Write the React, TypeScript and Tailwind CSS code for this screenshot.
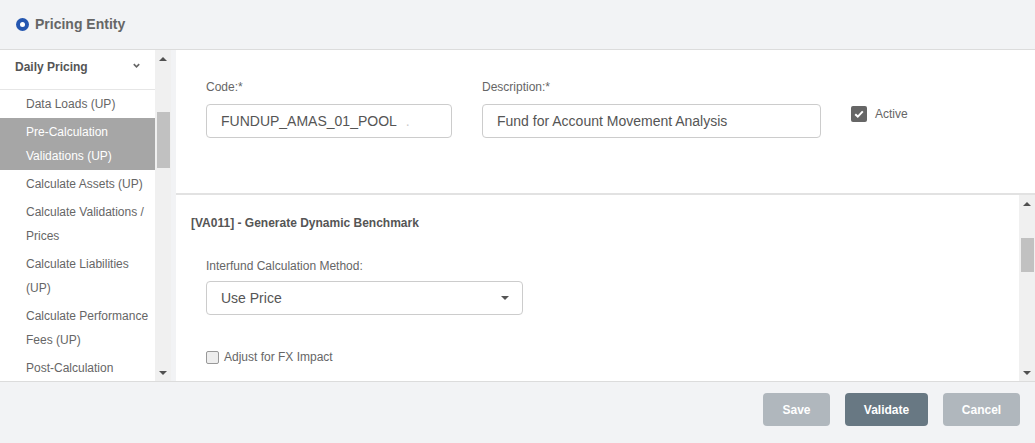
import React from "react"

function ScrollBar({thumbTop, thumbHeight}: {thumbTop: string; thumbHeight: string}) {
  return (
    <div className="w-[16px] h-full bg-[#f0f0f0] flex flex-col items-center">
      <div className="h-[17px] flex items-center justify-center">
        <div className="w-0 h-0 border-l-[4px] border-r-[4px] border-b-[4px] border-l-transparent border-r-transparent border-b-[#505050]" />
      </div>
      <div className="flex-1 w-full relative">
        <div className={`absolute left-[2px] right-[1px] bg-[#c1c1c1] ${thumbTop} ${thumbHeight}`} />
      </div>
      <div className="h-[17px] flex items-center justify-center">
        <div className="w-0 h-0 border-l-[4px] border-r-[4px] border-t-[4px] border-l-transparent border-r-transparent border-t-[#505050]" />
      </div>
    </div>
  )
}

const menuItems = [
  "Data Loads (UP)",
  "Pre-Calculation Validations (UP)",
  "Calculate Assets (UP)",
  "Calculate Validations / Prices",
  "Calculate Liabilities (UP)",
  "Calculate Performance Fees (UP)",
  "Post-Calculation",
]

export default function App() {
  return (
    <div className="w-[1035px] h-[443px] flex flex-col bg-[#f2f3f5] font-['Liberation_Sans',Arial,sans-serif] text-[#666] overflow-hidden">
      {/* header */}
      <div className="h-[50px] shrink-0 flex items-center pl-[16px] border-b border-[#dcdcdc]">
        <div className="w-[13px] h-[13px] rounded-full bg-[#2456b0] flex items-center justify-center">
          <div className="w-[5px] h-[5px] rounded-full bg-white" />
        </div>
        <span className="ml-[6px] text-[14px] font-bold text-[#666]">Pricing Entity</span>
      </div>

      <div className="flex-1 flex min-h-0">
        {/* sidebar */}
        <div className="w-[155px] bg-white overflow-hidden">
          <div className="h-[40px] border-b border-[#e6e6e6] pt-[9px] pl-[15px] pr-[14px] flex justify-between">
            <span className="text-[12px] leading-[16px] font-bold text-[#555]">Daily Pricing</span>
            <svg width="9" height="9" viewBox="0 0 10 10" className="mt-[2px]">
              <path d="M2 3.5 L5 6.5 L8 3.5" fill="none" stroke="#666" strokeWidth="1.8" />
            </svg>
          </div>
          <ul>
            {menuItems.map((item, i) => (
              <li
                key={item}
                className={`pl-[26px] pr-[5px] py-[2px] text-[12px] leading-[24px] ${i === 1 ? "bg-[#a6a6a6] text-white" : "text-[#666]"}`}
              >
                {item}
              </li>
            ))}
          </ul>
        </div>
        <ScrollBar thumbTop="top-[45px]" thumbHeight="h-[56px]" />
        <div className="w-[5px]" />

        {/* right content */}
        <div className="flex-1 flex flex-col bg-white min-w-0">
          <div className="h-[145px] shrink-0 border-b-2 border-[#e2e2e2] pl-[30px] pt-[29px] flex items-start">
            <div className="w-[246px]">
              <div className="text-[12px] leading-[16px]">Code:*</div>
              <div className="mt-[9px] h-[34px] border border-[#cccccc] rounded-[4px] flex items-center pl-[14px] text-[14px] text-[#555]">
                FUNDUP_AMAS_01_POOL<span className="ml-[9px] text-[#ccc]">.</span>
              </div>
            </div>
            <div className="w-[339px] ml-[30px]">
              <div className="text-[12px] leading-[16px]">Description:*</div>
              <div className="mt-[9px] h-[34px] border border-[#cccccc] rounded-[4px] flex items-center pl-[14px] text-[14px] text-[#555]">
                Fund for Account Movement Analysis
              </div>
            </div>
            <div className="ml-[30px] mt-[26px] flex items-center">
              <div className="w-[16px] h-[16px] rounded-[2px] bg-[#666] flex items-center justify-center">
                <svg width="12" height="12" viewBox="0 0 12 12">
                  <path d="M2.2 6.2 L4.8 8.6 L9.8 3.4" fill="none" stroke="white" strokeWidth="2" />
                </svg>
              </div>
              <span className="ml-[8px] text-[12px]">Active</span>
            </div>
          </div>

          <div className="flex-1 flex min-h-0">
            <div className="flex-1 pl-[15px] pt-[20px]">
              <div className="text-[12px] leading-[16px] font-bold text-[#555]">[VA011] - Generate Dynamic Benchmark</div>
              <div className="pl-[15px]">
                <div className="mt-[27px] text-[12px] leading-[16px]">Interfund Calculation Method:</div>
                <div className="mt-[7px] w-[317px] h-[34px] border border-[#cccccc] rounded-[4px] flex items-center justify-between pl-[14px] pr-[13px] text-[14px] text-[#555]">
                  <span>Use Price</span>
                  <div className="w-0 h-0 border-l-[4px] border-r-[4px] border-t-[4px] border-l-transparent border-r-transparent border-t-[#555]" />
                </div>
                <div className="mt-[34px] flex items-center">
                  <div className="w-[13px] h-[13px] rounded-[2px] border border-[#999] bg-[#eeeeee]" />
                  <span className="ml-[5px] text-[12px] leading-[16px]">Adjust for FX Impact</span>
                </div>
              </div>
            </div>
            <ScrollBar thumbTop="top-[26px]" thumbHeight="h-[34px]" />
          </div>
        </div>
      </div>

      {/* footer */}
      <div className="h-[62px] shrink-0 border-t border-[#dcdcdc] flex justify-end items-start pt-[11px] pr-[15px] gap-[15px]">
        <button className="w-[67px] h-[33px] rounded-[4px] bg-[#b0b7bd] text-white text-[12px] font-bold">Save</button>
        <button className="w-[83px] h-[33px] rounded-[4px] bg-[#687883] text-white text-[12px] font-bold">Validate</button>
        <button className="w-[77px] h-[33px] rounded-[4px] bg-[#b0b7bd] text-white text-[12px] font-bold">Cancel</button>
      </div>
    </div>
  )
}
